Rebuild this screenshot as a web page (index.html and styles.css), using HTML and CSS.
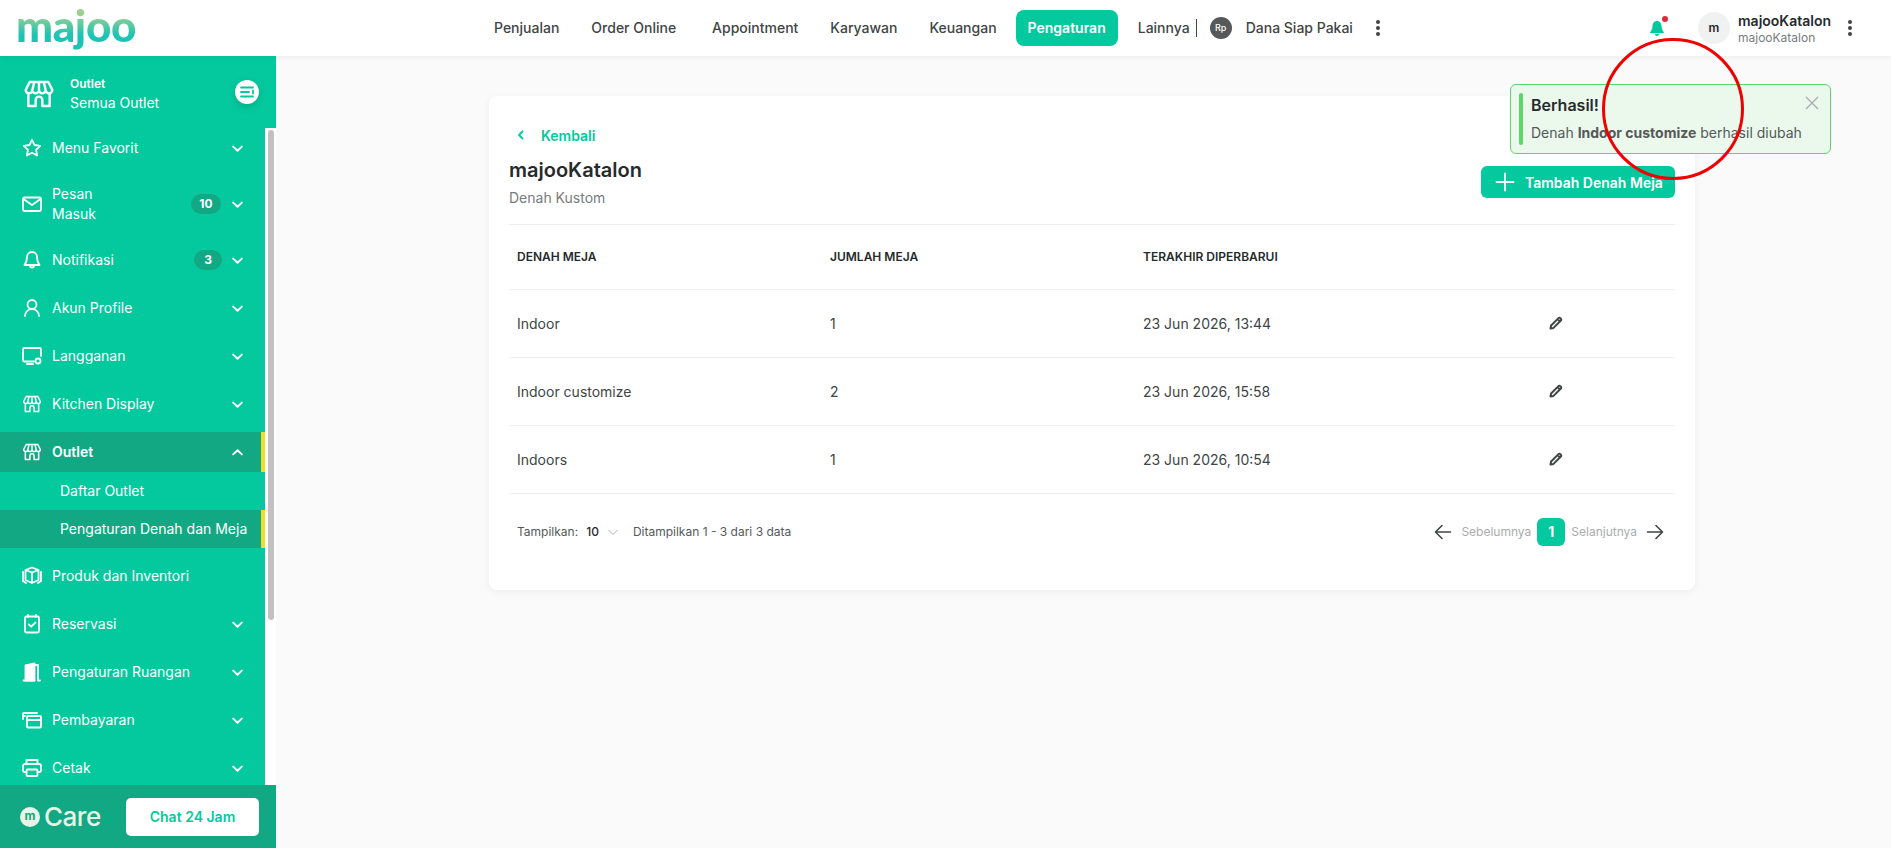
FILE: index.html
```html
<!DOCTYPE html>
<html lang="en">
<head>
    <meta charset="UTF-8">
    <title>majoo - Pengaturan Denah dan Meja</title>
    <link rel="stylesheet" href="styles.css">
</head>
<body>
    <svg class="icon-defs" width="0" height="0">
        <symbol id="i-store" viewBox="0 0 24 24"><path d="M5 3h14l3 6c0 1.500-1.200 2.500-2.500 2.500S17 10.500 17 9c0 1.500-1.200 2.500-2.500 2.500S12 10.500 12 9c0 1.500-1.200 2.500-2.500 2.500S7 10.500 7 9c0 1.500-1.200 2.500-2.500 2.500S2 10.500 2 9z M4 11.500V21h5.500v-4.500a2.500 2.500 0 0 1 5 0V21H20v-9.500 M8.500 3L7 9 M15.500 3L17 9 M12 3v6" /></symbol>
        <symbol id="i-chev" viewBox="0 0 12 12"><path d="M2 4.300L6 8l4-3.700" /></symbol>
        <symbol id="i-edit" viewBox="0 0 16 16"><path d="M2.500 13.500l.6-3L10.500 3.100a1.200 1.200 0 0 1 1.700 0l.7.700a1.200 1.200 0 0 1 0 1.700L5.500 12.900z M9.500 4l2.500 2.500" /></symbol>
    </svg>

    <header class="topbar">
        <div class="logo">majoo</div>
        <nav class="topnav">
            <a class="topnav-item">Penjualan</a>
            <a class="topnav-item wide">Order Online</a>
            <a class="topnav-item">Appointment</a>
            <a class="topnav-item">Karyawan</a>
            <a class="topnav-item">Keuangan</a>
            <a class="topnav-item active">Pengaturan</a>
            <a class="topnav-item more">Lainnya</a>
            <span class="topnav-sep"></span>
            <span class="rp-badge">Rp</span>
            <a class="topnav-item dana">Dana Siap Pakai</a>
            <span class="dots"><i></i><i></i><i></i></span>
        </nav>
        <div class="topbar-right">
            <span class="bell">
                <svg width="18" height="18" viewBox="0 0 18 18"><path fill="#04c99e" d="M9 2c-3 0-4.300 2.300-4.500 5-.2 2.500-.8 4.300-2.300 6.300-.3.500 0 .9.500.9h12.600c.5 0 .8-.4.5-.9-1.500-2-2.100-3.800-2.300-6.300C13.300 4.300 12 2 9 2z M7 15h4c0 1-.8 2-2 2s-2-1-2-2z"/></svg>
                <i class="bell-dot"></i>
            </span>
            <span class="avatar">m</span>
            <div class="user">
                <div class="user-name">majooKatalon</div>
                <div class="user-sub">majooKatalon</div>
            </div>
            <span class="dots"><i></i><i></i><i></i></span>
        </div>
    </header>

    <div class="layout">
        <aside class="sidebar">
            <div class="outlet-box">
                <svg class="outlet-icon"><use href="#i-store"/></svg>
                <div class="outlet-text">
                    <div class="outlet-label">Outlet</div>
                    <div class="outlet-name">Semua Outlet</div>
                </div>
                <span class="outlet-toggle">
                    <svg width="14" height="12" viewBox="0 0 14 12"><path d="M1 1.500h12 M1 6h8 M1 10.500h12 M13 4.500v3"/></svg>
                </span>
            </div>

            <div class="side-scroll">
                <ul class="side-menu">
                    <li class="side-item">
                        <svg class="side-icon" viewBox="0 0 20 20"><path d="M10 1.800l2.500 5.200 5.700.8-4.100 4 1 5.700-5.100-2.700-5.100 2.700 1-5.700-4.100-4 5.700-.8z"/></svg>
                        <span class="side-label">Menu Favorit</span>
                        <svg class="chev"><use href="#i-chev"/></svg>
                    </li>
                    <li class="side-item tall">
                        <svg class="side-icon" viewBox="0 0 20 20"><rect x="1" y="3.500" width="18" height="13.500" rx="1.500"/><path d="M1.500 5l8.500 6 8.500-6"/></svg>
                        <span class="side-label">Pesan<br>Masuk</span>
                        <span class="badge">10</span>
                        <svg class="chev"><use href="#i-chev"/></svg>
                    </li>
                    <li class="side-item">
                        <svg class="side-icon" viewBox="0 0 20 20"><path d="M10 2c-3 0-5 2.300-5 5.300 0 3.500-1 5.700-2.500 7.700h15c-1.500-2-2.500-4.200-2.500-7.700C15 4.300 13 2 10 2z M8 15.500c0 1.200.8 2 2 2s2-.8 2-2"/></svg>
                        <span class="side-label">Notifikasi</span>
                        <span class="badge small">3</span>
                        <svg class="chev"><use href="#i-chev"/></svg>
                    </li>
                    <li class="side-item">
                        <svg class="side-icon" viewBox="0 0 20 20"><circle cx="10" cy="6.500" r="4.500"/><path d="M3 18c.3-4 3-6.800 7-6.800s6.700 2.800 7 6.800"/></svg>
                        <span class="side-label">Akun Profile</span>
                        <svg class="chev"><use href="#i-chev"/></svg>
                    </li>
                    <li class="side-item">
                        <svg class="side-icon" viewBox="0 0 20 20"><path d="M12 15.500H2.500A1.500 1.500 0 0 1 1 14V3.500A1.500 1.500 0 0 1 2.500 2h15A1.500 1.500 0 0 1 19 3.500V10 M5 18h6"/><circle cx="16" cy="15" r="2.500"/></svg>
                        <span class="side-label">Langganan</span>
                        <svg class="chev"><use href="#i-chev"/></svg>
                    </li>
                    <li class="side-item">
                        <svg class="side-icon"><use href="#i-store"/></svg>
                        <span class="side-label">Kitchen Display</span>
                        <svg class="chev"><use href="#i-chev"/></svg>
                    </li>
                    <li class="side-item open">
                        <svg class="side-icon"><use href="#i-store"/></svg>
                        <span class="side-label">Outlet</span>
                        <svg class="chev up"><use href="#i-chev"/></svg>
                    </li>
                    <li class="side-sub">Daftar Outlet</li>
                    <li class="side-sub current">Pengaturan Denah dan Meja</li>
                    <li class="side-item">
                        <svg class="side-icon" viewBox="0 0 20 20"><path d="M10 1.500l6.500 2.500v10L10 17l-6.500-3V4z M3.500 4L10 6.500 16.500 4 M10 6.500V17 M1 6v9l3 2 M19 6v9l-3 2"/></svg>
                        <span class="side-label">Produk dan Inventori</span>
                    </li>
                    <li class="side-item">
                        <svg class="side-icon" viewBox="0 0 20 20"><rect x="3" y="2.500" width="14" height="16" rx="1.500"/><path d="M7 10.500l2.200 2.200L13.500 8.500 M6 1v2 M14 1v2"/></svg>
                        <span class="side-label">Reservasi</span>
                        <svg class="chev"><use href="#i-chev"/></svg>
                    </li>
                    <li class="side-item">
                        <svg class="side-icon" viewBox="0 0 20 20"><path class="solid" d="M3.500 18.500V3.500L12.500 1.500v17z"/><path d="M12.500 3h3.500v15.500h2 M1.500 18.500h11"/></svg>
                        <span class="side-label">Pengaturan Ruangan</span>
                        <svg class="chev"><use href="#i-chev"/></svg>
                    </li>
                    <li class="side-item">
                        <svg class="side-icon" viewBox="0 0 20 20"><rect x="5" y="6" width="14" height="11.500" rx="1"/><path d="M5 10h14 M15 3H2a1 1 0 0 0-1 1v5 M3 6H1"/></svg>
                        <span class="side-label">Pembayaran</span>
                        <svg class="chev"><use href="#i-chev"/></svg>
                    </li>
                    <li class="side-item">
                        <svg class="side-icon" viewBox="0 0 20 20"><path d="M4.500 14H2.500A1.500 1.500 0 0 1 1 12.500V8a2 2 0 0 1 2-2h14a2 2 0 0 1 2 2v4.500a1.500 1.500 0 0 1-1.500 1.500h-2 M4.500 6V2h11v4"/><rect x="4.500" y="11.500" width="11" height="6.500" rx="1"/></svg>
                        <span class="side-label">Cetak</span>
                        <svg class="chev"><use href="#i-chev"/></svg>
                    </li>
                </ul>
                <div class="scroll-track"><div class="scroll-thumb"></div></div>
            </div>

            <div class="side-footer">
                <div class="care">
                    <span class="care-dot">m</span>
                    <span class="care-text">Care</span>
                </div>
                <button class="chat-btn">Chat 24 Jam</button>
            </div>
        </aside>

        <main class="content">
            <section class="card">
                <a class="back">
                    <svg width="12" height="12" viewBox="0 0 12 12"><path d="M7.500 2.500L4 6l3.500 3.500"/></svg>
                    Kembali
                </a>
                <div class="card-head">
                    <div>
                        <h1 class="card-title">majooKatalon</h1>
                        <div class="card-sub">Denah Kustom</div>
                    </div>
                    <button class="add-btn">
                        <svg width="20" height="20" viewBox="0 0 20 20"><path d="M10 1.500v17 M1.500 10h17"/></svg>
                        Tambah Denah Meja
                    </button>
                </div>

                <table class="table">
                    <thead>
                        <tr>
                            <th class="col-a">DENAH MEJA</th>
                            <th class="col-b">JUMLAH MEJA</th>
                            <th class="col-c">TERAKHIR DIPERBARUI</th>
                            <th></th>
                        </tr>
                    </thead>
                    <tbody>
                        <tr>
                            <td>Indoor</td>
                            <td>1</td>
                            <td>23 Jun 2026, 13:44</td>
                            <td><svg class="edit"><use href="#i-edit"/></svg></td>
                        </tr>
                        <tr>
                            <td>Indoor customize</td>
                            <td>2</td>
                            <td>23 Jun 2026, 15:58</td>
                            <td><svg class="edit"><use href="#i-edit"/></svg></td>
                        </tr>
                        <tr>
                            <td>Indoors</td>
                            <td>1</td>
                            <td>23 Jun 2026, 10:54</td>
                            <td><svg class="edit"><use href="#i-edit"/></svg></td>
                        </tr>
                    </tbody>
                </table>

                <div class="pager-row">
                    <span class="pager-label">Tampilkan:</span>
                    <span class="pager-size">10</span>
                    <svg class="pager-chev" width="12" height="12" viewBox="0 0 12 12"><path d="M1.500 4L6 8.500 10.500 4"/></svg>
                    <span class="pager-label">Ditampilkan 1 - 3 dari 3 data</span>
                    <div class="pager">
                        <svg class="arrow" width="18" height="18" viewBox="0 0 18 18"><path d="M16.500 9H1.500 M8 2.500L1.500 9 8 15.500"/></svg>
                        <span class="pager-link first">Sebelumnya</span>
                        <span class="page-num">1</span>
                        <span class="pager-link last">Selanjutnya</span>
                        <svg class="arrow" width="18" height="18" viewBox="0 0 18 18"><path d="M1.500 9h15 M10 2.500L16.500 9 10 15.500"/></svg>
                    </div>
                </div>
            </section>
        </main>
    </div>

    <div class="toast">
        <span class="toast-bar"></span>
        <div class="toast-body">
            <div class="toast-title">Berhasil!</div>
            <div class="toast-text">Denah <b>Indoor customize</b> berhasil diubah</div>
        </div>
        <svg class="toast-close" width="14" height="14" viewBox="0 0 14 14"><path d="M1 1l12 12 M13 1L1 13"/></svg>
    </div>

    <div class="red-circle"></div>
</body>
</html>
```

FILE: styles.css
```css
* {
    box-sizing: border-box;
}
html, body {
    margin: 0;
    height: 100%;
    overflow: hidden;
}
body {
    font-family: Inter, "Noto Sans", sans-serif;
    font-size: 14px;
    color: #272a2b;
    background: #fafafa;
}
.icon-defs {
    position: absolute;
}
ul {
    list-style: none;
    margin: 0;
    padding: 0;
}

/* top bar */
.topbar {
    height: 56px;
    background: white;
    display: flex;
    align-items: center;
    box-shadow: 0 2px 6px rgba(0,0,0,0.05);
    position: relative;
    z-index: 2;
}
.logo {
    width: 478px;
    padding-left: 16px;
    margin-top: -7px;
    font-family: Lato, sans-serif;
    font-size: 44px;
    font-weight: 900;
    letter-spacing: -0.4px;
    line-height: 50px;
    background: linear-gradient(180deg, #9ad08f 30%, #1cc4b4 70%);
    -webkit-background-clip: text;
    background-clip: text;
    color: transparent;
}
.topnav {
    display: flex;
    align-items: center;
    color: #404545;
    font-weight: 500;
}
.topnav-item {
    padding: 0 16px;
    line-height: 36px;
    border-radius: 8px;
}
.topnav-item.wide {
    margin-right: 4px;
}
.topnav-item.active {
    background: #04c99e;
    color: white;
    font-weight: 600;
    margin: 0 4px 0 3px;
    padding: 0 12px;
}
.topnav-item.more {
    padding-right: 6px;
}
.topnav-sep {
    width: 1px;
    height: 18px;
    background: #404545;
}
.rp-badge {
    width: 22px;
    height: 22px;
    border-radius: 50%;
    background: #55595a;
    color: white;
    font-size: 9px;
    text-align: center;
    line-height: 22px;
    margin-left: 13px;
}
.topnav-item.dana {
    padding: 0 23px 0 14px;
}
.dots {
    display: flex;
    flex-direction: column;
    gap: 2px;
    width: 4px;
}
.dots i {
    width: 4px;
    height: 4px;
    border-radius: 50%;
    background: #404545;
}
.topbar-right {
    margin-left: auto;
    display: flex;
    align-items: center;
    padding-right: 39px;
}
.bell {
    position: relative;
    width: 18px;
    height: 18px;
    margin-right: 32px;
}
.bell-dot {
    position: absolute;
    top: -3px;
    right: -2px;
    width: 6px;
    height: 6px;
    border-radius: 50%;
    background: #dd2c3c;
}
.avatar {
    width: 32px;
    height: 32px;
    border-radius: 50%;
    background: #f0f1f1;
    font-size: 12px;
    font-weight: 600;
    text-align: center;
    line-height: 32px;
    margin-right: 8px;
}
.user {
    width: 110px;
}
.user-name {
    font-size: 14px;
    font-weight: 600;
    line-height: 18px;
}
.user-sub {
    font-size: 12px;
    color: #777c7e;
    line-height: 15px;
}

/* layout */
.layout {
    display: flex;
    height: calc(100vh - 56px);
}
.content {
    flex: 1;
    padding: 40px 196px 0 213px;
}

/* sidebar */
.sidebar {
    width: 276px;
    background: #04c99e;
    color: white;
    display: flex;
    flex-direction: column;
    flex: none;
}
.sidebar svg {
    fill: none;
    stroke: white;
    stroke-width: 1.8;
    stroke-linecap: round;
    stroke-linejoin: round;
}
.sidebar svg path.solid {
    fill: white;
}
.outlet-box {
    height: 72px;
    display: flex;
    align-items: center;
    padding: 0 17px 0 23px;
    flex: none;
}
.outlet-icon {
    width: 32px;
    height: 32px;
    margin-top: 4px;
}
.outlet-text {
    margin-left: 15px;
    flex: 1;
    margin-top: 4px;
}
.outlet-label {
    font-size: 12px;
    font-weight: 600;
    line-height: 18px;
}
.outlet-name {
    line-height: 20px;
}
.outlet-toggle {
    width: 24px;
    height: 24px;
    border-radius: 50%;
    background: white;
    display: flex;
    align-items: center;
    justify-content: center;
    box-shadow: 0 3px 8px rgba(0,0,0,0.15);
    margin-top: -1px;
}
.sidebar .outlet-toggle svg {
    stroke: #04c99e;
}
.side-scroll {
    flex: 1;
    display: flex;
    overflow: hidden;
    min-height: 0;
}
.side-menu {
    width: 265px;
    flex: none;
}
.side-item {
    height: 40px;
    margin-bottom: 8px;
    display: flex;
    align-items: center;
    padding: 0 21px 0 22px;
}
.side-item.tall {
    height: 56px;
}
.side-item.open {
    margin-bottom: 0;
    background: #13a884;
    border-right: 4px solid #f7dc1e;
    padding-right: 17px;
    font-weight: 600;
}
.side-sub {
    height: 38px;
    line-height: 38px;
    padding-left: 60px;
}
.side-sub.current {
    background: #13a884;
    border-right: 4px solid #f7dc1e;
    margin-bottom: 8px;
}
.side-icon {
    width: 20px;
    height: 20px;
    flex: none;
}
.side-label {
    margin-left: 10px;
    flex: 1;
    line-height: 20px;
}
.badge {
    width: 30px;
    height: 20px;
    border-radius: 10px;
    background: #13a884;
    font-size: 12px;
    font-weight: 700;
    text-align: center;
    line-height: 20px;
    margin-right: 10px;
}
.badge.small {
    width: 28px;
    margin-right: 9px;
}
.chev {
    width: 13px;
    height: 13px;
    flex: none;
}
.chev.up {
    transform: rotate(180deg);
}
.scroll-track {
    flex: 1;
    background: white;
    padding: 2px;
}
.scroll-thumb {
    width: 6px;
    height: 490px;
    background: #c1c1c1;
    border-radius: 3px;
    margin-left: 1px;
}
.side-footer {
    height: 63px;
    background: #13a884;
    display: flex;
    align-items: center;
    padding: 0 17px 0 20px;
    flex: none;
}
.care {
    display: flex;
    align-items: center;
    flex: 1;
}
.care-dot {
    width: 20px;
    height: 20px;
    border-radius: 50%;
    background: #e6f5e6;
    color: #13a884;
    font-size: 12px;
    font-weight: 700;
    text-align: center;
    line-height: 18px;
}
.care-text {
    font-size: 26px;
    font-weight: 500;
    margin-left: 4px;
    color: #e6f5e6;
    letter-spacing: -0.5px;
}
.chat-btn {
    width: 133px;
    height: 38px;
    background: white;
    border: none;
    border-radius: 5px;
    color: #04c99e;
    font: 600 14px Inter, sans-serif;
}

/* card */
.card {
    background: white;
    border-radius: 8px;
    box-shadow: 0 2px 8px rgba(0,0,0,0.05);
    height: 494px;
    padding: 30px 20px 0;
}
.back {
    display: flex;
    align-items: center;
    height: 18px;
    color: #04c99e;
    font-weight: 600;
    gap: 14px;
}
.back svg {
    margin-left: 6px;
    fill: none;
    stroke: #04c99e;
    stroke-width: 1.8;
    stroke-linecap: round;
    stroke-linejoin: round;
}
.card-head {
    display: flex;
    justify-content: space-between;
    border-bottom: 1px solid #eeeeee;
    height: 81px;
    padding-top: 14px;
}
.card-title {
    margin: 0;
    font-size: 20px;
    font-weight: 600;
    line-height: 24px;
}
.card-sub {
    color: #777c7e;
    line-height: 20px;
    margin-top: 6px;
}
.add-btn {
    width: 194px;
    height: 32px;
    margin-top: 8px;
    background: #04c99e;
    border: none;
    border-radius: 6px;
    color: white;
    font: 600 14px Inter, sans-serif;
    display: flex;
    align-items: center;
    padding: 0 0 0 14px;
    gap: 10px;
}
.add-btn svg {
    stroke: white;
    stroke-width: 1.8;
    stroke-linecap: round;
}

/* table */
.table {
    width: 100%;
    border-collapse: collapse;
    table-layout: fixed;
}
.table th {
    height: 64px;
    font-size: 12px;
    font-weight: 600;
    text-align: left;
    padding: 0 8px;
    border-bottom: 1px solid #eeeeee;
}
.table td {
    height: 68px;
    padding: 0 8px;
    border-bottom: 1px solid #eeeeee;
    color: #404545;
}
.col-a, .col-b {
    width: 313px;
}
.col-c {
    width: 397px;
}
.edit {
    width: 16px;
    height: 16px;
    display: block;
    margin-left: 8px;
    fill: none;
    stroke: #404545;
    stroke-width: 2;
    stroke-linejoin: round;
}

/* pagination */
.pager-row {
    display: flex;
    align-items: center;
    height: 28px;
    margin-top: 24px;
    padding: 0 11px 0 8px;
    font-size: 12px;
}
.pager-label {
    color: #55595a;
}
.pager-size {
    margin-left: 8px;
    font-weight: 500;
}
.pager-chev {
    margin: 0 14px 0 8px;
    fill: none;
    stroke: #a9adae;
    stroke-width: 1;
}
.pager {
    margin-left: auto;
    display: flex;
    align-items: center;
}
.pager-link {
    color: #a9adae;
}
.pager-link.first {
    margin: 0 6px 0 9px;
}
.pager-link.last {
    margin: 0 9px 0 6px;
}
.page-num {
    width: 28px;
    height: 28px;
    background: #04c99e;
    color: white;
    border-radius: 6px;
    font-size: 14px;
    font-weight: 700;
    text-align: center;
    line-height: 28px;
}
.arrow {
    fill: none;
    stroke: #404545;
    stroke-width: 1.6;
    stroke-linecap: round;
    stroke-linejoin: round;
}

/* overlays */
.toast {
    position: absolute;
    left: 1510px;
    top: 84px;
    width: 321px;
    height: 70px;
    background: #ebf8ec;
    border: 1px solid #5fd66a;
    border-radius: 6px;
    z-index: 3;
}
.toast-bar {
    position: absolute;
    left: 8px;
    top: 8px;
    width: 4px;
    height: 52px;
    background: #5fd66a;
    border-radius: 2px;
}
.toast-body {
    padding: 9px 0 0 20px;
}
.toast-title {
    font-size: 16px;
    font-weight: 600;
    line-height: 22px;
}
.toast-text {
    margin-top: 7px;
    line-height: 20px;
    color: #55595a;
}
.toast-close {
    position: absolute;
    right: 11px;
    top: 11px;
    stroke: #a9adae;
    stroke-width: 1.3;
}
.red-circle {
    position: absolute;
    left: 1602px;
    top: 38px;
    width: 142px;
    height: 142px;
    border: 3px solid #f00000;
    border-radius: 50%;
    z-index: 4;
}
```
